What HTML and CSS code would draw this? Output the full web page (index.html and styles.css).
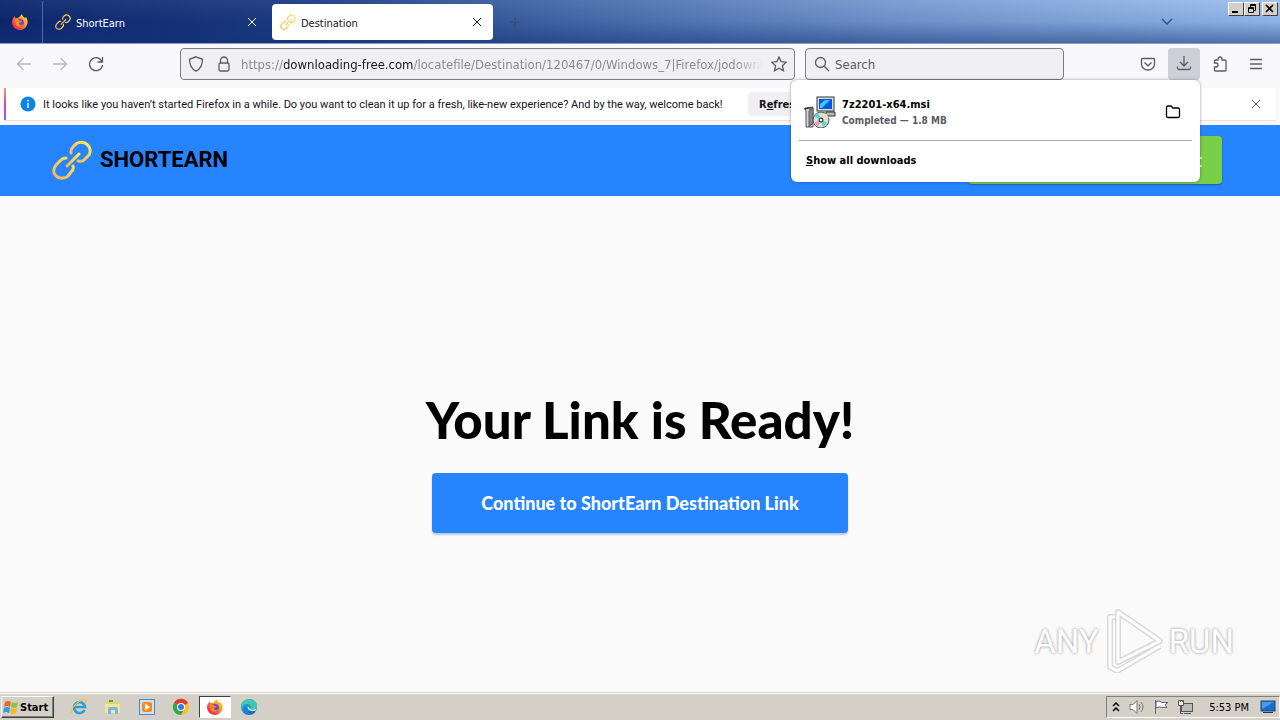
FILE: index.html
```html
<!DOCTYPE html>
<html lang="en">
<head>
    <meta charset="UTF-8">
    <meta name="viewport" content="width=device-width, initial-scale=1.0">
    <title>Destination</title>
    <link rel="stylesheet" href="styles.css">
</head>
<body>
    <!-- Shared shapes -->
    <svg class="defs" width="0" height="0" aria-hidden="true">
        <defs>
            <linearGradient id="gold" x1="1" y1="0" x2="0" y2="1">
                <stop offset="0" stop-color="#fdf04e"/>
                <stop offset="1" stop-color="#fbae5c"/>
            </linearGradient>
            <linearGradient id="flame" x1="1" y1="0" x2="0" y2="1">
                <stop offset="0" stop-color="#ffe93a"/>
                <stop offset="0.4" stop-color="#ff9a1f"/>
                <stop offset="0.75" stop-color="#ff3a47"/>
                <stop offset="1" stop-color="#e5156b"/>
            </linearGradient>
            <linearGradient id="edge" x1="0" y1="0" x2="1" y2="1">
                <stop offset="0" stop-color="#35b7e5"/>
                <stop offset="1" stop-color="#0b58a8"/>
            </linearGradient>
            <symbol id="chain" viewBox="0 0 40 40">
                <g fill="none" stroke-width="3" stroke-linecap="round">
                    <path d="M19 13 L19 11 Q19 9 21 7 L24 4 Q28 1 33 3 Q39 7 38 12 Q38 14 36 16 L32 20 Q30 22 26 21"/>
                    <path d="M14 18 Q11 18 9 20 L5 24 Q1 28 2 33 Q5 39 11 38 Q14 38 16 36 L19 32 Q22 30 21 26"/>
                    <path d="M15 26 L27 14"/>
                </g>
            </symbol>
            <symbol id="firefox" viewBox="0 0 16 16">
                <path fill="url(#flame)" d="M10 0 C10 2 12 3 13 4 L14 3 C16 6 16 9 15 11 C14 14 11 16 8 16 C4 16 0 13 0 8 C0 6 1 4 3 2 L3 4 L5 4 C7 4 8 2 10 0Z"/>
                <circle cx="8" cy="9" r="4" fill="#7a3bd6"/>
                <path fill="#ff8a1e" d="M3 6 C5 5 7 6 8 7 L10 7 C9 9 7 8 7 10 C8 12 11 11 12 9 C12 13 6 14 4 11Z"/>
            </symbol>
            <symbol id="close" viewBox="0 0 10 10">
                <path d="M1 1 L9 9 M9 1 L1 9" fill="none" stroke="currentColor"/>
            </symbol>
        </defs>
    </svg>

    <header class="tabstrip">
        <button class="fx-button" aria-label="Firefox View"><svg width="16" height="16"><use href="#firefox"/></svg></button>
        <div class="tab">
            <svg width="16" height="16" stroke="url(#gold)"><use href="#chain"/></svg>
            <span class="tab-title">ShortEarn</span>
            <button class="tab-close" aria-label="Close tab"><svg width="10" height="10"><use href="#close"/></svg></button>
        </div>
        <div class="tab active">
            <svg width="16" height="16" stroke="url(#gold)"><use href="#chain"/></svg>
            <span class="tab-title">Destination</span>
            <button class="tab-close" aria-label="Close tab"><svg width="10" height="10"><use href="#close"/></svg></button>
        </div>
        <button class="new-tab" aria-label="New tab"><svg width="10" height="10"><path d="M5 0V10M0 5H10" stroke="#3a4b6c"/></svg></button>
        <button class="all-tabs" aria-label="List all tabs"><svg width="14" height="8"><path d="M2 1 L7 6 L12 1" fill="none" stroke="#34507e" stroke-width="1.4"/></svg></button>
        <div class="window-buttons">
            <button aria-label="Minimize"><svg width="10" height="10"><path d="M1 8H7" stroke="#000" stroke-width="2"/></svg></button>
            <button aria-label="Restore"><svg width="10" height="10" fill="none" stroke="#000"><path d="M3.500 3V.5H8.500V6.500H6.500M3 1.500H9M1.500 3.500H6.500V8.500H1.500ZM1 4.500H7"/></svg></button>
            <button class="win-close" aria-label="Close"><svg width="10" height="10"><path d="M1 1L8 8M8 1L1 8" stroke="#000" stroke-width="1.600"/></svg></button>
        </div>
    </header>

    <nav class="toolbar">
        <button class="tool" aria-label="Back" disabled><svg width="16" height="16"><path d="M15 8H1.500M7.500 2L1.500 8L7.500 14"/></svg></button>
        <button class="tool" aria-label="Forward" disabled><svg width="16" height="16"><path d="M1 8H14.500M8.500 2L14.500 8L8.500 14"/></svg></button>
        <button class="tool" aria-label="Reload"><svg width="16" height="16"><path d="M14 5.500A6.500 6.500 0 1 0 14.500 9M14.500 1V6H9.500"/></svg></button>
        <div class="urlbar">
            <svg width="16" height="16"><path d="M8 .8L14.500 3.300C14.500 9 12.500 13 8 15.200C3.500 13 1.500 9 1.500 3.300Z"/></svg>
            <svg width="16" height="16"><rect x="3" y="7" width="10" height="8" rx="1.500"/><path d="M4.500 7V4.500a3.500 3.500 0 0 1 7 0V7"/></svg>
            <input class="url" type="text" aria-label="Address" value="https://downloading-free.com/locatefile/Destination/120467/0/Windows_7|Firefox/jodownloader">
            <svg width="16" height="16"><path d="M8 1L10.100 5.600L15.200 6.200L11.400 9.700L12.500 14.800L8 12.200L3.500 14.800L4.600 9.700L.8 6.200L5.900 5.600Z"/></svg>
        </div>
        <div class="searchbar">
            <svg width="16" height="16"><circle cx="6.500" cy="6.500" r="5"/><path d="M10.200 10.200L15 15"/></svg>
            <input type="text" placeholder="Search" aria-label="Search">
        </div>
        <div class="toolbar-end">
            <button class="tool" aria-label="Pocket"><svg width="16" height="16"><path d="M1.500 3.500q0-1 1-1h11q1 0 1 1V8a6.500 6 0 0 1-13 0ZM4.500 6.500L8 9.800L11.500 6.500"/></svg></button>
            <div class="downloads">
                <button class="tool open" aria-label="Downloads"><svg width="16" height="16"><path d="M8 0V10M4 6L8 10L12 6M1.500 10.500V12q0 1.500 1.500 1.500H13q1.500 0 1.500-1.500V10.500"/></svg></button>
                <div class="panel">
                    <div class="download">
                        <svg width="32" height="32" viewBox="0 0 32 32">
                            <path d="M1 12L9 11V31H2V15Z" fill="#d6d6d6" stroke="#555"/>
                            <path d="M6 13V30M0 13L6 12L9 12" fill="none" stroke="#222"/>
                            <path d="M5 15L9 12V27L5 31Z" fill="#888"/>
                            <path d="M22 16H31V20H22Z" fill="#b8b8b8" stroke="#333"/>
                            <rect class="monitor" x="13" y="1" width="17" height="14"/>
                            <rect class="display" x="15" y="3" width="13" height="10"/>
                            <path class="glare" d="M16 12L16 8L21 4H26L18 12Z"/>
                            <circle class="disc" cx="17" cy="24" r="8"/>
                            <path class="disc-a" d="M17 24L10 20L14 16Z"/>
                            <path class="disc-b" d="M17 24L22 17L25 22Z"/>
                            <path class="disc-a" d="M17 24L24 27L19 31Z"/>
                            <path class="disc-c" d="M17 24L14 31L10 27Z"/>
                            <circle class="hub" cx="17" cy="24" r="2"/>
                        </svg>
                        <div class="download-info">
                            <div class="download-name">7z2201-x64.msi</div>
                            <div class="download-status">Completed — 1.8 MB</div>
                        </div>
                        <button class="tool folder" aria-label="Show in folder"><svg width="16" height="16"><path d="M1.500 3.500q0-1.500 1.500-1.500H6L8 4H13q1.500 0 1.500 1.500V12q0 1.500-1.500 1.500H3q-1.500 0-1.500-1.500Z"/></svg></button>
                    </div>
                    <button class="show-all"><u>S</u>how all downloads</button>
                </div>
            </div>
            <button class="tool" aria-label="Extensions"><svg width="16" height="16"><path d="M2.500 14.500V11H4a2 2 0 0 0 0-4H2.500V5q0-1 1-1H6V3a1.800 1.800 0 0 1 4 0V4h3q1 0 1 1V14.500q0 .5-1 .5H3.500q-1 0-1-.5Z"/></svg></button>
            <button class="tool" aria-label="Menu"><svg width="16" height="16"><path d="M2 3.500H14M2 8H14M2 12.500H14"/></svg></button>
        </div>
    </nav>

    <div class="notice-area">
        <div class="notice">
            <svg width="16" height="16"><circle cx="8" cy="8" r="7.500" fill="#0a84e8"/><path d="M8 7V12M8 4V5.500" stroke="#fff" stroke-width="1.400"/></svg>
            <span>It looks like you haven’t started Firefox in a while. Do you want to clean it up for a fresh, like-new experience? And by the way, welcome back!</span>
            <button class="refresh">R<u>e</u>fresh…</button>
            <button class="notice-close" aria-label="Dismiss"><svg width="10" height="10"><use href="#close"/></svg></button>
        </div>
    </div>

    <div class="site-header">
        <a class="brand" href="#">
            <svg width="40" height="40" stroke="url(#gold)"><use href="#chain"/></svg>
            <span>SHORTEARN</span>
        </a>
        <a class="account" href="#">Sign Out</a>
    </div>

    <main class="page">
        <h1>Your Link is Ready!</h1>
        <button class="continue">Continue to ShortEarn Destination Link</button>
        <div class="watermark">
            <span>ANY</span>
            <svg width="60" height="64" viewBox="0 0 60 64">
                <path d="M11 8H6V58L13 62L56 37M14 3V53L56 32Z" fill="none" stroke="#d9d9d9" stroke-width="6" stroke-linejoin="round"/>
                <path d="M11 8H6V58L13 62L56 37M14 3V53L56 32Z" fill="none" stroke="#fff" stroke-width="3" stroke-linejoin="round"/>
            </svg>
            <span>RUN</span>
        </div>
    </main>

    <footer class="taskbar">
        <button class="start">
            <svg width="16" height="16"><path d="M2 3Q5 1 8 3L7 8Q4 6 1 8Z" fill="#ef6526"/><path d="M9 3Q12 5 15 3L14 8Q11 10 8 8Z" fill="#8bc53f"/><path d="M1 9Q4 7 7 9L6 14Q3 12 0 14Z" fill="#2b9ce6"/><path d="M8 9Q11 11 14 9L13 14Q10 16 7 14Z" fill="#fdb913"/></svg>
            Start
        </button>
        <div class="apps">
            <button aria-label="Internet Explorer"><svg width="18" height="18"><path d="M14.500 12A5.500 5.500 0 1 1 15 9H5" fill="none" stroke="#2c9be0" stroke-width="2.600"/><path d="M2 15C-1 13 5 5 12 2C17 0 17 3 15 5" fill="none" stroke="#f0c63e" stroke-width="1.300"/></svg></button>
            <button aria-label="Explorer"><svg width="18" height="18"><path d="M2 3H7L8 4H14V8H2Z" fill="#eccf65"/><path d="M1 6H16V15H1Z" fill="#f8e59b"/><path d="M4 16V11Q4 9 6 9H12Q14 9 14 11V16H11V12H7V16Z" fill="#6cbce4"/><path d="M5 3H9" stroke="#48a558" stroke-width="2"/></svg></button>
            <button aria-label="Media Player"><svg width="18" height="18"><rect x="1.500" y="1.500" width="15" height="15" fill="#cbe2f4" stroke="#5489bd"/><rect x="4" y="4" width="10" height="10" rx="2" fill="#f78b1e"/><path d="M7 5.500L12 9L7 12.500Z" fill="#fff"/></svg></button>
            <button aria-label="Chrome"><svg width="18" height="18"><circle cx="9" cy="9" r="8" fill="#fbc116"/><path d="M9 9L2 5A8 8 0 0 1 16 5Z" fill="#e33b2e"/><path d="M9 9L2 5A8 8 0 0 0 9 17L12 11Z" fill="#2da94f"/><circle cx="9" cy="9" r="4" fill="#fff"/><circle cx="9" cy="9" r="3" fill="#3978e8"/></svg></button>
            <button class="running" aria-label="Firefox"><svg width="16" height="16"><use href="#firefox"/></svg></button>
            <button aria-label="Edge"><svg width="18" height="18"><circle cx="9" cy="9" r="8" fill="url(#edge)"/><path d="M2 5C5-1 17 0 17 8C17 12 12 12 10 11C12 9 10 6 7 6C4 6 2 8 1 10Z" fill="#3fc9b0"/><path d="M7 8C5 12 9 16 14 15C9 19 3 15 4 10Q5 8 7 8Z" fill="#1183d6"/><path d="M8 8Q6 13 15 13L17 10Q13 13 10 11Z" fill="#e5f4f3"/></svg></button>
        </div>
        <div class="tray">
            <svg width="10" height="14"><path d="M2 6L5 3L8 6M2 11L5 8L8 11" fill="none" stroke="#000" stroke-width="1.500"/></svg>
            <svg width="16" height="16" fill="#fff" stroke="#777"><path d="M1 5.500H4L8 1.500V14.500L4 10.500H1Z"/><path d="M10 5Q12 8 10 11M12 3Q16 8 12 13" fill="none"/></svg>
            <svg width="16" height="16" fill="#fff" stroke="#666"><path d="M2.500 1V15"/><path d="M3 2.500Q6 1 9 3.500H15L12 6L14 8.500H9Q6 7 3 9Z"/></svg>
            <svg width="16" height="16" stroke="#555"><rect x="4.500" y="4.500" width="11" height="8" fill="#bbb"/><path d="M7 14.500H14M3.500 6V14.500H6" fill="none"/><path d="M1.500 1.500H6.500V6.500H1.500ZM3.500 1V3M5.500 1V3" fill="#eee"/></svg>
            <time>5:53 PM</time>
            <svg width="16" height="14"><rect x="1" y="1" width="14" height="10" fill="#176bd0" stroke="#244b7b"/><path d="M2 9L14 2V2H2Z" fill="#4a9aec"/><path d="M3 12.500H13" stroke="#333"/></svg>
        </div>
    </footer>
</body>
</html>
```

FILE: styles.css
```css
* {
    box-sizing: border-box;
}

body {
    margin: 0;
    min-height: 100vh;
    display: flex;
    flex-direction: column;
    font-family: "DejaVu Sans Condensed", "DejaVu Sans", sans-serif;
    font-size: 11px;
    color: #15141a;
    background: #fafafa;
}

button,
input {
    font: inherit;
    color: inherit;
    border: 0;
    padding: 0;
    background: none;
}

svg {
    flex: none;
    display: block;
}

.defs {
    position: absolute;
}

/* Tab strip */
.tabstrip {
    height: 44px;
    padding-top: 1px;
    display: flex;
    align-items: center;
    color: #fff;
    background: linear-gradient(to bottom, rgba(255, 255, 255, 0.06), rgba(20, 50, 120, 0.1) 50%, rgba(20, 50, 120, 0.55)), linear-gradient(to right, #0a246a, #1d3c83 25%, #466aa9 45%, #7799d0 70%, #9bc0ef);
    border-bottom: 1px solid #8d9cbc;
}

.fx-button {
    width: 43px;
    height: 42px;
    display: flex;
    align-items: center;
    justify-content: center;
    padding-right: 2px;
    border-right: 1px solid #5168a0;
}

.tab {
    width: 221px;
    height: 36px;
    margin-left: 4px;
    padding: 0 11px 0 8px;
    display: flex;
    align-items: center;
    gap: 5px;
    border-radius: 4px;
}

.tab.active {
    color: #15141a;
    background: #fff;
}

.tab-title {
    flex: 1;
    padding-top: 2px;
}

.new-tab {
    margin-left: 17px;
}

.all-tabs {
    margin-left: auto;
    margin-right: 54px;
}

.window-buttons {
    display: flex;
    align-self: flex-start;
    padding: 1px 2px 0 0;
}

.window-buttons button {
    width: 16px;
    height: 14px;
    padding: 1px 2px;
    background: #d4d0c8;
    border: 1px solid;
    border-color: #fff #404040 #404040 #fff;
}

.window-buttons .win-close {
    margin-left: 2px;
}

/* Navigation toolbar */
.toolbar {
    height: 40px;
    padding: 0 8px;
    display: flex;
    align-items: center;
    gap: 4px;
    background: #f9f9fb;
}

.toolbar svg {
    fill: none;
    stroke: #5b5b66;
    stroke-width: 1.3;
}

.tool {
    width: 32px;
    height: 32px;
    display: flex;
    align-items: center;
    justify-content: center;
    border-radius: 4px;
}

.tool:disabled {
    opacity: 0.4;
}

.tool.open {
    background: #cfd0d7;
}

.urlbar,
.searchbar {
    height: 32px;
    display: flex;
    align-items: center;
    border: 1px solid #7c7c88;
    border-radius: 4px;
    background: #f0f0f4;
    font-size: 13px;
}

.urlbar {
    flex: 1;
    margin-left: 64px;
    padding: 0 7px;
    gap: 12px;
}

.urlbar input {
    flex: 1;
    min-width: 0;
    margin: 0 -4px 0 -3px;
    color: transparent;
    background: linear-gradient(to right, #85858c 43px, #15141a 43px, #15141a 172px, #85858c 172px);
    background-clip: text;
    -webkit-background-clip: text;
    -webkit-mask-image: linear-gradient(to left, transparent, #000 30px);
    mask-image: linear-gradient(to left, transparent, #000 30px);
}

.searchbar {
    width: 259px;
    margin-left: 6px;
    padding: 0 8px;
    gap: 5px;
}

.searchbar input {
    flex: 1;
    min-width: 0;
}

.searchbar input::placeholder {
    color: #5b5b66;
    opacity: 1;
}

.toolbar-end {
    margin-left: 64px;
    display: flex;
    gap: 4px;
}

/* Downloads panel */
.downloads {
    position: relative;
}

.panel {
    position: absolute;
    z-index: 2;
    top: 100%;
    right: 0;
    width: 409px;
    padding: 8px;
    border-radius: 6px;
    background: #fff;
    box-shadow: 0 0 3px rgba(40, 40, 60, 0.5);
    font-weight: bold;
    color: #000;
}

.download {
    height: 53px;
    padding: 0 3px 0 5px;
    display: flex;
    align-items: center;
    gap: 6px;
    border-bottom: 1px solid #a9a9ae;
}

.download > svg,
.folder {
    margin-bottom: 4px;
}

.download-info {
    flex: 1;
    padding-bottom: 2px;
    line-height: 16px;
}

.panel .download svg {
    stroke-width: 1;
}

.download svg .monitor {
    fill: #ddd;
    stroke: #333;
}

.download svg .display {
    fill: #0a56df;
    stroke: none;
}

.download svg .glare {
    fill: #31c9f5;
    stroke: none;
}

.download svg .disc {
    fill: #d9dfe1;
    stroke: #555;
}

.download svg .disc-a {
    fill: #5fd6c0;
    stroke: none;
}

.download svg .disc-b {
    fill: #f0ddb0;
    stroke: none;
}

.download svg .disc-c {
    fill: #d99ab4;
    stroke: none;
}

.download svg .hub {
    fill: #fff;
    stroke: #111;
}

.download-status {
    font-size: 10px;
    color: #5b5b66;
}

.panel .folder svg {
    stroke: #000;
    stroke-width: 1.3;
}

.show-all {
    display: block;
    width: 100%;
    height: 33px;
    padding: 5px 7px 0;
    text-align: left;
}

/* Notification bar */
.notice-area {
    padding: 4px 4px 5px;
    background: #f9f9fb;
}

.notice {
    height: 32px;
    padding: 0 15px 0 14px;
    display: flex;
    align-items: center;
    gap: 7px;
    white-space: nowrap;
    background: #fff;
    border-left: 2px solid;
    border-image: linear-gradient(#f5a05f, #dc4aa5, #9059ff) 1;
    box-shadow: 0 1px 1px #f3ddd5;
}

.notice span {
    min-width: 685px;
    font-family: Roboto, sans-serif;
}

.refresh {
    height: 24px;
    margin-left: 13px;
    padding: 0 11px;
    border-radius: 4px;
    background: #f0f0f4;
    font-weight: bold;
}

.notice-close {
    margin-left: auto;
    color: #5b5b66;
}

/* Web page */
.site-header {
    height: 71px;
    padding: 0 58px 2px 52px;
    display: flex;
    align-items: center;
    justify-content: space-between;
    background: #2684ff;
}

.brand {
    display: flex;
    align-items: center;
    gap: 8px;
    color: #000;
    font: bold 22px Roboto, sans-serif;
    text-decoration: none;
}

.account {
    width: 254px;
    padding: 0 20px;
    border-radius: 4px;
    background: #78cf48;
    box-shadow: 0 1px 2px rgba(0, 0, 0, 0.3);
    color: #fff;
    font: bold 18px/48px Lato, sans-serif;
    text-align: right;
    text-decoration: none;
}

.page {
    flex: 1;
    position: relative;
    display: flex;
    flex-direction: column;
    align-items: center;
    justify-content: center;
    padding-top: 36px;
}

h1 {
    margin: 0 0 20px;
    font: 900 51px/66px Lato, sans-serif;
    color: #000;
}

.continue {
    width: 416px;
    height: 60px;
    margin-bottom: 4px;
    border-radius: 4px;
    background: #2684ff;
    box-shadow: 0 2px 2px rgba(0, 60, 130, 0.25);
    color: #fff;
    font: 900 18px Lato, sans-serif;
}

.watermark {
    position: absolute;
    right: 46px;
    bottom: 19px;
    display: flex;
    align-items: center;
    gap: 5px;
    color: #fff;
    font: 33px Roboto, sans-serif;
    text-shadow: 0 0 3px #888;
}

/* Windows taskbar */
.taskbar {
    height: 28px;
    padding: 1px 0 0 1px;
    display: flex;
    align-items: center;
    background: #d4d0c8;
    border-top: 1px solid #d4d0c8;
    box-shadow: inset 0 1px #fff;
    color: #000;
}

.start {
    width: 53px;
    height: 22px;
    display: flex;
    align-items: center;
    gap: 1px;
    padding-left: 1px;
    border: 1px solid;
    border-color: #fff #404040 #404040 #fff;
    box-shadow: inset -1px -1px #808080;
    font-weight: bold;
    font-size: 11px;
}

.apps {
    display: flex;
    margin-left: 9px;
    gap: 2px;
}

.apps button {
    width: 32px;
    height: 22px;
    display: flex;
    align-items: center;
    justify-content: center;
}

.apps .running {
    background: #fff;
    border: 1px solid;
    border-color: #404040 #fff #fff #404040;
}

.tray {
    margin-left: auto;
    height: 22px;
    padding: 0 3px 0 4px;
    display: flex;
    align-items: center;
    gap: 8px;
    border: 1px solid;
    border-color: #808080 #fff #fff #808080;
}

.tray time {
    margin: 0 3px 0 8px;
}
```
